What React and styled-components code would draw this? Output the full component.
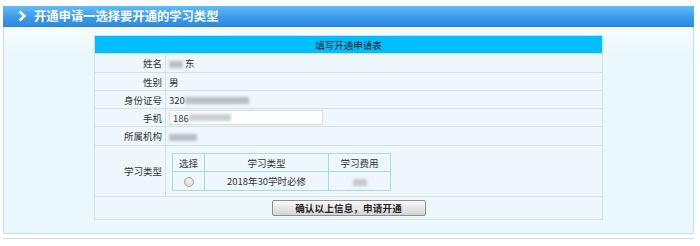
import React from "react";
import styled, { createGlobalStyle } from "styled-components";

const Global = createGlobalStyle`
  html, body { margin: 0; padding: 0; background: #fff; }
  body { font-family: "Noto Sans CJK SC", "Noto Sans", sans-serif; color: #333; }
`;

const Page = styled.div`
  width: 700px;
  height: 246px;
  padding: 6px 6px 0 3px;
  box-sizing: border-box;
`;

const TitleBar = styled.div`
  height: 21px;
  background: linear-gradient(#62bcf6, #3c9ced 55%, #2d8ae0);
  border-bottom: 1px solid #2a7fd2;
  display: flex;
  align-items: center;
  gap: 7px;
  padding-left: 15px;
  box-sizing: border-box;
  color: #fff;
  font-size: 12.3px;
  font-weight: bold;
`;

const Panel = styled.div`
  background: linear-gradient(#f6fcfe, #eaf8fd 30px);
  border: 1px solid #bfe5ea;
  border-top: none;
  padding: 8px 0 13px;
  display: flex;
  justify-content: center;
`;

const BottomRule = styled.div`
  margin-top: 4px;
  height: 1px;
  border-top: 1px solid #d6d6d6;
`;

const FormTable = styled.table`
  width: 509px;
  border-collapse: collapse;
  border: 1px solid #d0dfe4;
  font-size: 9.5px;
  background: #edf7fc;
`;

const HeadCell = styled.td`
  background: #00beff;
  color: #222;
  text-align: center;
  height: 17px;
  padding: 0;
  border: 1px solid #c9dde4;
`;

const Label = styled.td`
  width: 67px;
  text-align: right;
  padding: 0 3px 0 0;
  border: 1px solid #d3e1e6;
  height: ${(p) => p.$h || 17}px;
  color: #333;
`;

const Value = styled.td`
  padding: 0 0 0 ${(p) => p.$pl ?? 3}px;
  border: 1px solid #d3e1e6;
  height: ${(p) => p.$h || 17}px;
  text-align: ${(p) => p.$align || "left"};
  color: #333;
`;

const Blur = styled.span`
  display: inline-block;
  vertical-align: middle;
  width: ${(p) => p.$w}px;
  height: 7px;
  background: ${(p) => p.$c || "#b9bfc3"};
  filter: blur(1.6px);
  margin-right: ${(p) => p.$mr || 0}px;
`;

const Field = styled.div`
  width: 154px;
  height: 15px;
  box-sizing: border-box;
  background: #fff;
  border: 1px solid #d8dde0;
  display: flex;
  align-items: center;
  padding-left: 3px;
  font-size: 9.5px;
  color: #333;
`;

const TypeTable = styled.table`
  border-collapse: collapse;
  margin: 7px 0 5px 6px;
  width: 219px;
  font-size: 9.5px;
  background: #edf7fc;
`;

const TypeCell = styled.td`
  border: 1px solid #a6dbe2;
  text-align: center;
  height: ${(p) => p.$h || 17}px;
  width: ${(p) => (p.$w ? p.$w + "px" : "auto")};
  padding: 0;
  color: #333;
`;

const Radio = styled.span`
  display: inline-block;
  width: 8px;
  height: 8px;
  border-radius: 50%;
  border: 1px solid #a9a9a9;
  background: radial-gradient(circle at 50% 40%, #f4f4f4, #cfcfcf);
  vertical-align: middle;
`;

const Submit = styled.button`
  width: 154px;
  height: 16px;
  padding: 0;
  border: 1px solid #8f8f8f;
  border-radius: 2px;
  background: linear-gradient(#fafafa, #e6e6e6 50%, #d4d4d4);
  font-family: "Noto Sans CJK SC", sans-serif;
  font-size: 9.5px;
  font-weight: bold;
  color: #222;
  letter-spacing: 0.2px;
  line-height: 14px;
`;

const Chevron = () => (
  <svg width="9" height="12" viewBox="0 0 9 12">
    <polyline points="1.5,1.5 6.5,6 1.5,10.5" fill="none" stroke="#fff" strokeWidth="2.6" />
  </svg>
);

export default function App() {
  return (
    <>
      <Global />
      <Page>
        <TitleBar>
          <Chevron />
          <span>开通申请一选择要开通的学习类型</span>
        </TitleBar>
        <Panel>
          <FormTable>
            <tbody>
              <tr>
                <HeadCell colSpan={2}>填写开通申请表</HeadCell>
              </tr>
              <tr>
                <Label $h={18}>姓名</Label>
                <Value $h={18}>
                  <Blur $w={14} $mr={2} />东
                </Value>
              </tr>
              <tr>
                <Label>性别</Label>
                <Value>男</Value>
              </tr>
              <tr>
                <Label>身份证号</Label>
                <Value>
                  320<Blur $w={64} />
                </Value>
              </tr>
              <tr>
                <Label>手机</Label>
                <Value>
                  <Field>
                    186<Blur $w={42} $c="#c9ced1" />
                  </Field>
                </Value>
              </tr>
              <tr>
                <Label $h={18}>所属机构</Label>
                <Value $h={18}>
                  <Blur $w={28} />
                </Value>
              </tr>
              <tr>
                <Label $h={50}>学习类型</Label>
                <Value $h={50} $pl={0}>
                  <TypeTable>
                    <tbody>
                      <tr>
                        <TypeCell $w={31}>选择</TypeCell>
                        <TypeCell $w={123}>学习类型</TypeCell>
                        <TypeCell>学习费用</TypeCell>
                      </tr>
                      <tr>
                        <TypeCell $h={18}>
                          <Radio />
                        </TypeCell>
                        <TypeCell $h={18}>2018年30学时必修</TypeCell>
                        <TypeCell $h={18}>
                          <Blur $w={14} $c="#c3c9cc" />
                        </TypeCell>
                      </tr>
                    </tbody>
                  </TypeTable>
                </Value>
              </tr>
              <tr>
                <Value colSpan={2} $h={22} $pl={0} $align="center">
                  <Submit>确认以上信息，申请开通</Submit>
                </Value>
              </tr>
            </tbody>
          </FormTable>
        </Panel>
        <BottomRule />
      </Page>
    </>
  );
}
